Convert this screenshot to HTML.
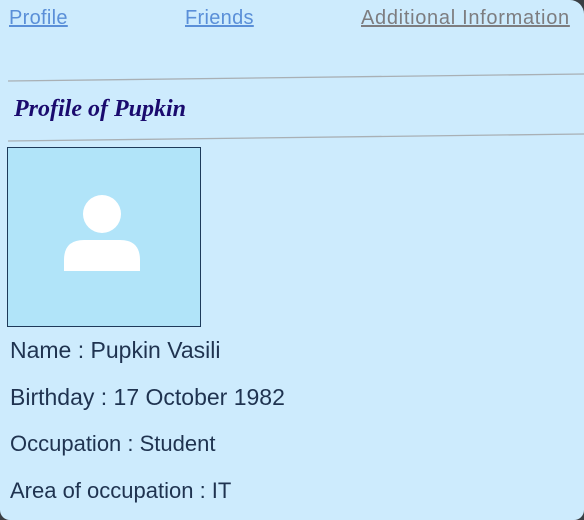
<!DOCTYPE html>
<html><head><style>
html,body{margin:0;padding:0;background:#3a3f44;}
.w{position:relative;width:584px;height:520px;background:#cdebfd;border-radius:0 14px 10px 10px;overflow:hidden;font-family:"Liberation Sans",sans-serif;}
a{position:absolute;top:7px;font-size:20px;text-decoration:underline;}
.t{position:absolute;left:10px;font-size:22px;color:#1f3350;white-space:nowrap;}
</style></head><body><div class="w">
<a style="left:9px;color:#5a8fd8;letter-spacing:0.3px">Profile</a>
<a style="left:185px;color:#5a8fd8;letter-spacing:0.3px">Friends</a>
<a style="left:361px;color:#7d7d80;letter-spacing:0.7px">Additional Information</a>
<svg width="584" height="520" style="position:absolute;left:0;top:0">
<line x1="8" y1="81" x2="584" y2="74" stroke="#a9b0b5" stroke-width="1.3"/>
<line x1="8" y1="141" x2="584" y2="134" stroke="#a9b0b5" stroke-width="1.3"/>
<rect x="7.5" y="147.5" width="193" height="179" fill="#b1e4f9" stroke="#1e3a5a"/>
<circle cx="102" cy="214" r="19" fill="#fff"/>
<path d="M64 271 L64 260 Q64 240 84 240 L120 240 Q140 240 140 260 L140 271 Z" fill="#fff"/>
</svg>
<div style="position:absolute;left:14px;top:96px;font:italic bold 24px 'Liberation Serif',serif;color:#1a0a6e">Profile of Pupkin</div>
<div class="t" style="top:337px;font-size:23px">Name : Pupkin Vasili</div>
<div class="t" style="top:384px;font-size:23px">Birthday : 17 October 1982</div>
<div class="t" style="top:431px">Occupation : Student</div>
<div class="t" style="top:478px">Area of occupation : IT</div>
</div></body></html>
